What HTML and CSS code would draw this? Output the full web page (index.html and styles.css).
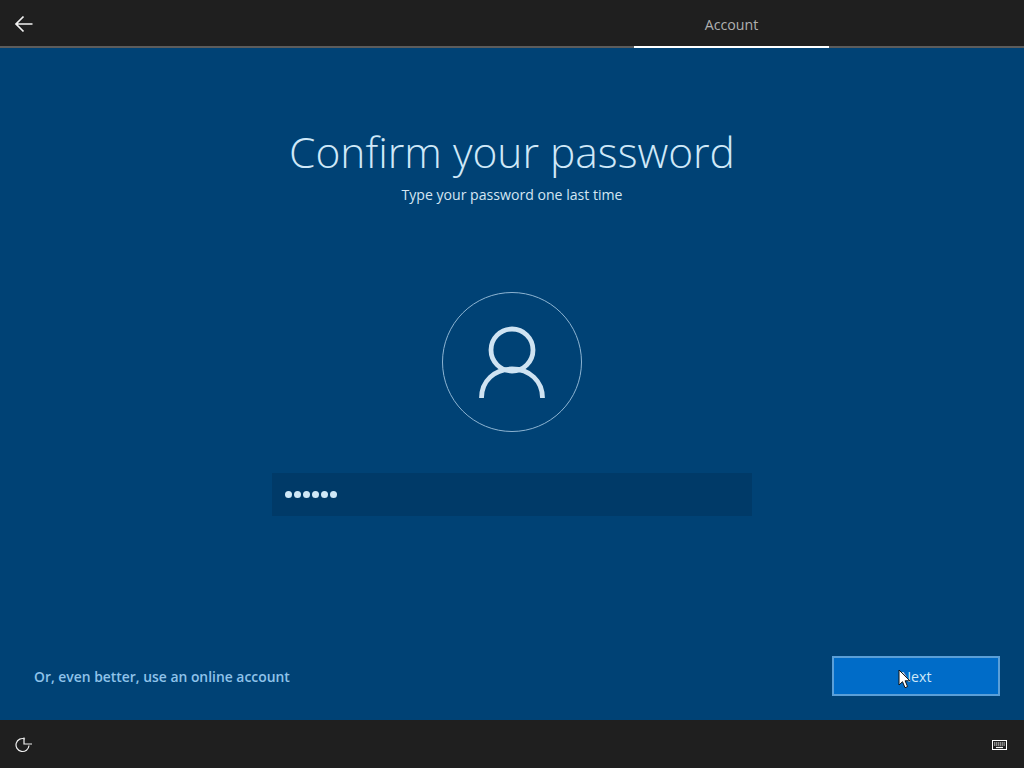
FILE: index.html
```html
<!DOCTYPE html>
<html lang="en">
<head>
<meta charset="utf-8">
<title>Confirm your password</title>
<link rel="stylesheet" href="styles.css">
</head>
<body>
<div class="page">
  <header class="topbar">
    <button class="back" aria-label="Back">
      <svg width="20" height="18" viewBox="0 0 20 18"><path d="M18.500 9H2M9.500 1.500L2 9l7.500 7.500" fill="none" stroke="#f2f2f2" stroke-width="1.700"/></svg>
    </button>
    <div class="tab">Account</div>
  </header>
  <main class="main">
    <h1 class="title">Confirm your password</h1>
    <p class="subtitle">Type your password one last time</p>
    <div class="avatar">
      <svg class="person" width="66" height="74" viewBox="0 0 66 74"><g fill="none" stroke="#cfe3f2" stroke-width="4.800"><circle cx="33" cy="24" r="21"/><path d="M2.500 72c0-17 13-29 30.500-29s30.500 12 30.500 29"/></g></svg>
    </div>
    <div class="field"><span class="dots"><i></i><i></i><i></i><i></i><i></i><i></i></span></div>
    <div class="actions">
      <a class="online">Or, even better, use an online account</a>
      <button class="next">Next
        <svg class="cursor" width="13" height="20" viewBox="0 0 13 20"><path d="M1 1v15l3.500-3.300 2.500 6 2.600-1.100-2.500-5.800h4.800z" fill="#fff" stroke="#111" stroke-width="1"/></svg>
      </button>
    </div>
  </main>
  <footer class="bottombar">
    <svg width="18" height="18" viewBox="0 0 18 18"><path d="M10 3A6.500 6.500 0 1 0 14 9.500M9 1.500V8H17" fill="none" stroke="#f0f0f0" stroke-width="1.200"/></svg>
    <svg width="15" height="10" viewBox="0 0 15 10"><rect x=".5" y=".5" width="14" height="9" fill="none" stroke="#ffffff"/><path d="M2 3h11M2 5h11" stroke="#f4f4f4" stroke-width="1.200" stroke-dasharray="1.300 .6"/><path d="M4 7.500h7" stroke="#f4f4f4" stroke-width="1.200"/></svg>
  </footer>
</div>
</body>
</html>
```
FILE: styles.css
```css
* { box-sizing: border-box; }
html, body { margin: 0; height: 100%; }
body { font-family: "Open Sans", "Noto Sans", "Liberation Sans", sans-serif; background: #004275; }
.page { display: grid; grid-template-rows: 48px 1fr 48px; width: 1024px; height: 768px; overflow: hidden; }
.topbar { display: flex; justify-content: space-between; background: #1f1f1f; border-bottom: 2px solid #5c5c5c; }
.back { display: flex; align-items: center; background: none; border: 0; padding: 2px 0 0 14px; height: 46px; }
.tab { width: 195px; height: 48px; margin-right: 195px; padding-top: 15px; border-bottom: 2px solid #fff; color: #b0b0b0; font-size: 14.200px; line-height: 20px; text-align: center; }
.main { display: flex; flex-direction: column; align-items: center; padding: 0 24px 24px 34px; background: #004275; }
.title { margin: 71px 0 0 -10px; font-size: 42.500px; line-height: 66px; font-weight: 300; color: #cfe8f8; white-space: nowrap; }
.subtitle { margin: 0 0 0 -10px; font-size: 14.100px; line-height: 20px; color: #d4e6f3; }
.avatar { display: flex; align-items: center; justify-content: center; width: 140px; height: 140px; margin: 87px 0 0 -10px; border: 1px solid #8db4d2; border-radius: 50%; }
.person { margin-top: 2px; }
.field { display: flex; align-items: center; width: 480px; height: 43px; margin: 41px 0 0 -10px; padding-left: 13px; background: #003a68; }
.dots { display: flex; gap: 2px; }
.dots i { width: 7px; height: 7px; border-radius: 50%; background: #cfe8f8; }
.actions { display: flex; align-items: center; justify-content: space-between; align-self: stretch; margin-top: auto; }
.online { color: #8fc3ea; font-size: 13.900px; font-weight: 600; }
.next { position: relative; width: 168px; height: 40px; border: 2px solid #5a9fd8; background: #006cc8; color: #cfe8f8; font: inherit; font-size: 14.200px; }
.cursor { position: absolute; left: 64px; top: 11px; }
.bottombar { display: flex; align-items: center; justify-content: space-between; padding: 2px 17px 0 15px; background: #1f1f1f; }
```
